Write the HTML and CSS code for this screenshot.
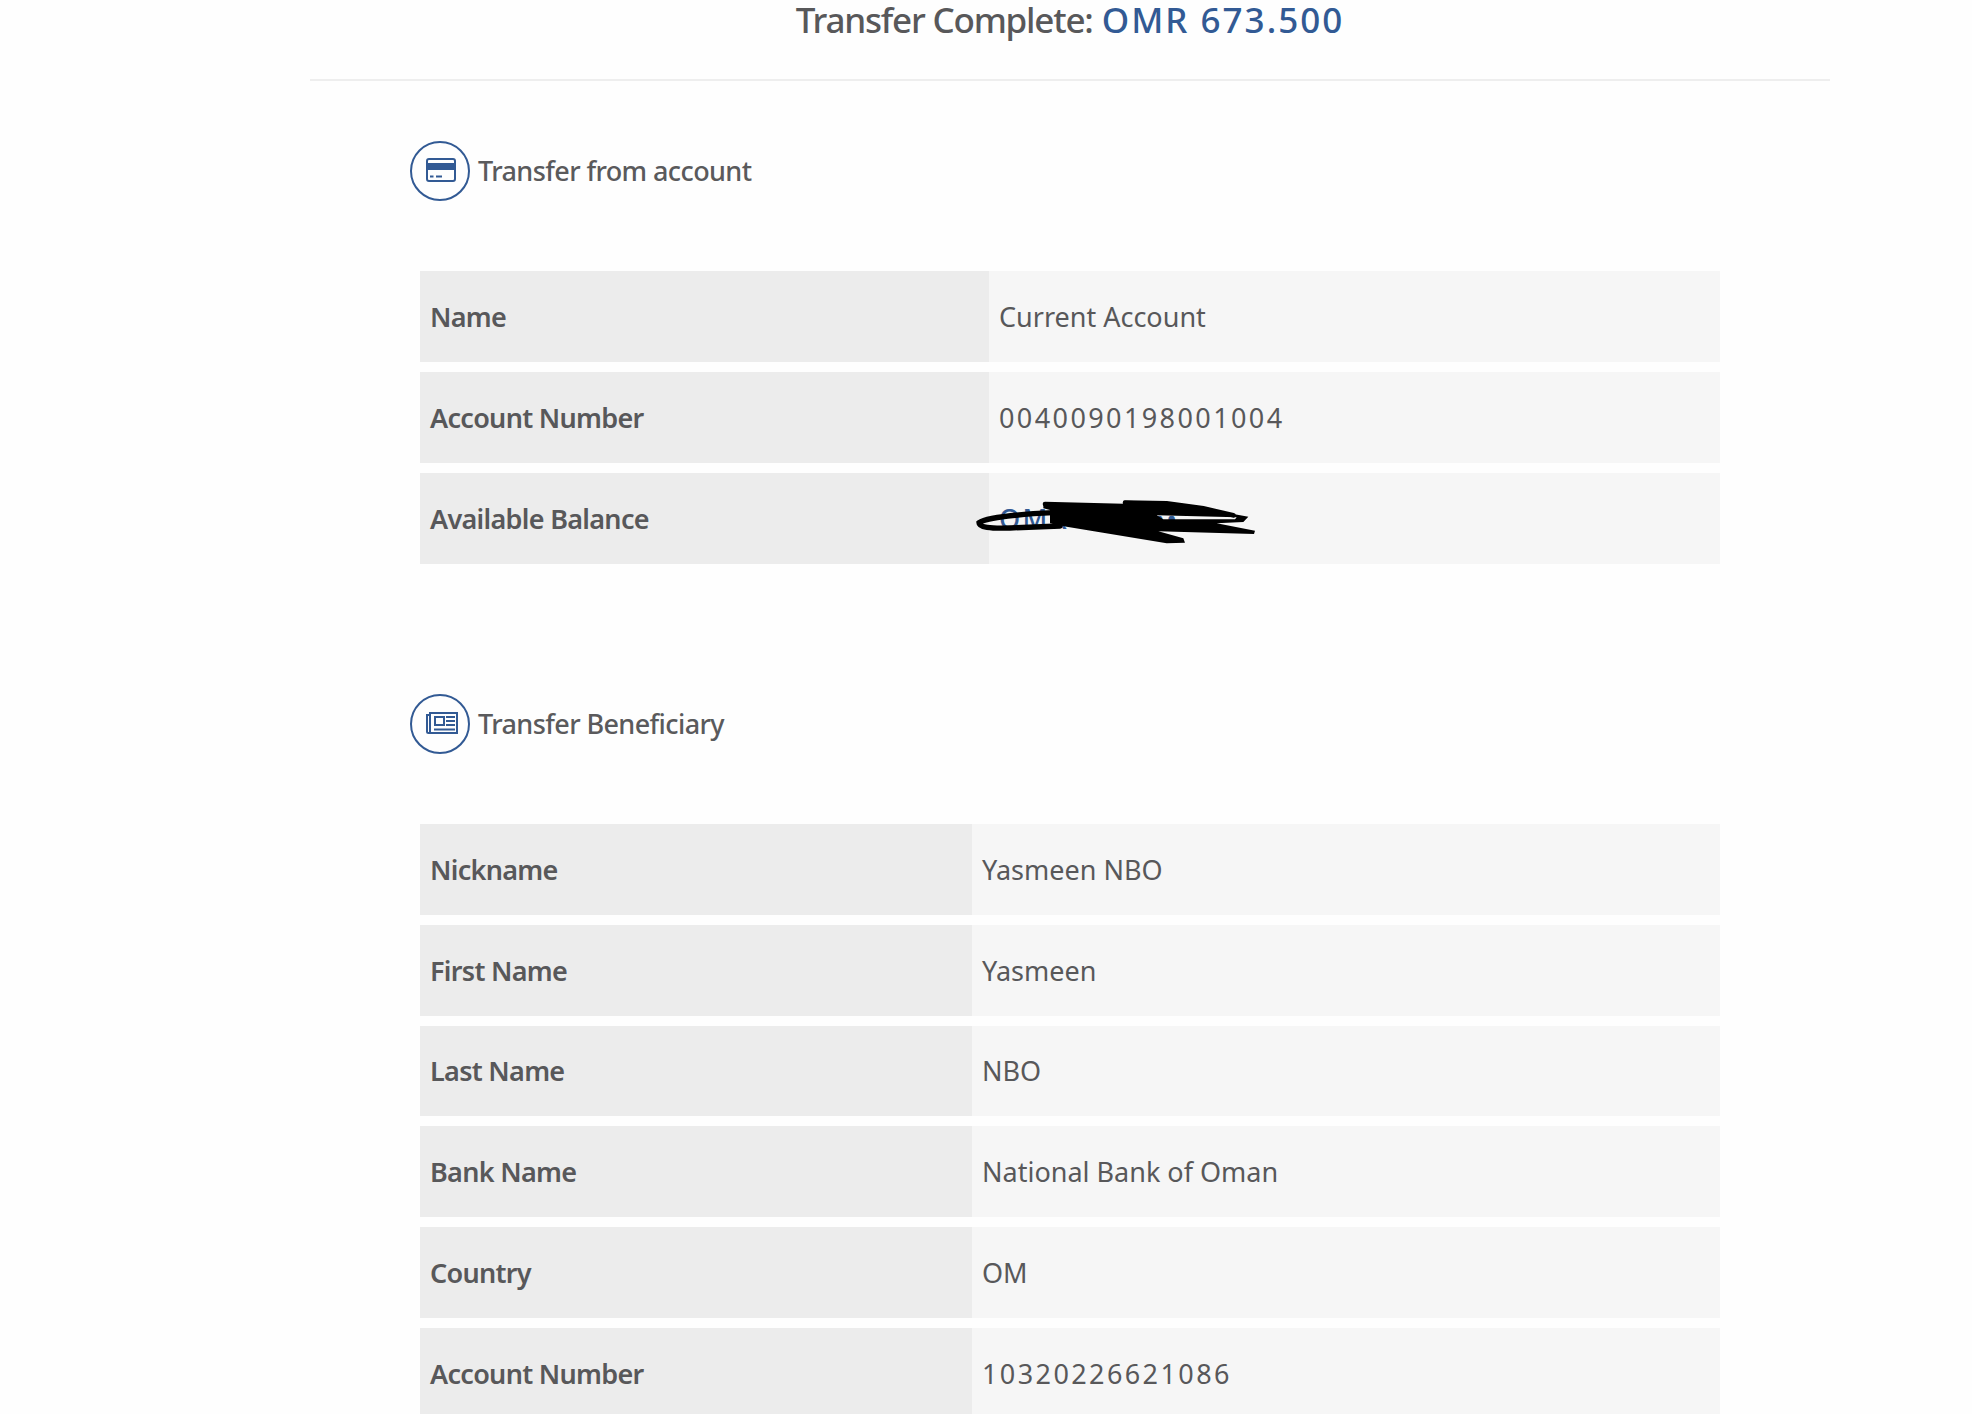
FILE: index.html
```html
<!DOCTYPE html>
<html lang="en">
<head>
<meta charset="utf-8">
<title>Transfer Complete</title>
<link rel="stylesheet" href="styles.css">
</head>
<body>
<main class="page">
  <header class="summary">
    <h1 class="summary-title"><span class="summary-label">Transfer Complete:</span> <span class="amount">OMR 673.500</span></h1>
  </header>

  <section class="section">
    <div class="section-head">
      <span class="badge">
        <svg class="icon-card" width="30" height="24" viewBox="0 0 30 24" aria-hidden="true">
          <rect x="1" y="1" width="28" height="22" rx="2" fill="none" stroke="#325a94" stroke-width="2"/>
          <rect x="1" y="5" width="28" height="7" fill="#325a94"/>
          <rect x="4" y="17.5" width="3.5" height="2" fill="#325a94"/>
          <rect x="10" y="17.5" width="6" height="2" fill="#325a94"/>
        </svg>
      </span>
      <h2 class="section-title">Transfer from account</h2>
    </div>
    <table class="details details-from">
      <tr><th>Name</th><td>Current Account</td></tr>
      <tr><th>Account Number</th><td class="num">0040090198001004</td></tr>
      <tr><th>Available Balance</th><td class="balance num"><span class="amount-small">OMR ••••••••</span>
        <svg class="scribble" width="290" height="50" viewBox="75 105 870 150" aria-hidden="true">
          <path fill="#000" fill-rule="evenodd" d="M280 130L520 135L522 122L650 125L760 140L850 162L895 170L880 186L800 190L915 212L912 222L625 214L700 235L705 248L650 250L500 225L350 200L300 190L300 150L280 145ZM620 166L860 172L855 178L640 178Z"/>
          <path fill="none" stroke="#000" stroke-width="16" stroke-linecap="round" d="M310 158C220 162 110 172 87 188C87 202 120 206 180 204C230 202 280 200 330 198"/>
          <path fill="none" stroke="#000" stroke-width="14" stroke-linecap="round" d="M285 132L520 138M525 128L650 130L760 145L850 166"/>
        </svg>
      </td></tr>
    </table>
  </section>

  <section class="section section-next">
    <div class="section-head">
      <span class="badge">
        <svg class="icon-news" width="32" height="22" viewBox="0 0 32 22" aria-hidden="true">
          <g fill="none" stroke="#325a94" stroke-width="2">
            <path d="M4 3H1V19.5A1.5 1.5 0 0 0 2.5 21H31V1H4V21"/>
            <rect x="9" y="5" width="9" height="8"/>
          </g>
          <g fill="#325a94">
            <rect x="20" y="4" width="9" height="2"/>
            <rect x="20" y="8" width="9" height="2"/>
            <rect x="20" y="12" width="9" height="2"/>
            <rect x="8" y="16.5" width="21" height="2"/>
          </g>
        </svg>
      </span>
      <h2 class="section-title">Transfer Beneficiary</h2>
    </div>
    <table class="details details-to">
      <tr><th>Nickname</th><td>Yasmeen NBO</td></tr>
      <tr><th>First Name</th><td>Yasmeen</td></tr>
      <tr><th>Last Name</th><td>NBO</td></tr>
      <tr><th>Bank Name</th><td>National Bank of Oman</td></tr>
      <tr><th>Country</th><td>OM</td></tr>
      <tr><th>Account Number</th><td class="num">10320226621086</td></tr>
    </table>
  </section>
</main>
</body>
</html>
```
FILE: styles.css
```css
html, body {
  margin: 0;
  padding: 0;
  height: 100%;
  overflow: hidden;
  background: #fefefe;
}

body {
  font-family: "Noto Sans", "Open Sans", sans-serif;
  color: #58585a;
}

.page {
  width: 1520px;
  margin-left: 310px;
}

.summary {
  height: 79px;
  border-bottom: 2px solid #eeeeee;
  text-align: center;
}

.summary-title {
  margin: 0;
  font-size: 35px;
  line-height: 40px;
  font-weight: 500;
  color: #58585a;
}

.summary-label {
  letter-spacing: -1.2px;
}

.amount {
  color: #325a94;
  letter-spacing: 2px;
}

.section {
  margin-top: 60px;
  padding-left: 100px;
}

.section-next {
  margin-top: 120px;
}

.section-head {
  display: flex;
  align-items: center;
  gap: 8px;
  height: 60px;
  margin-bottom: 60px;
}

.badge {
  flex: none;
  display: flex;
  align-items: center;
  justify-content: center;
  box-sizing: border-box;
  width: 60px;
  height: 60px;
  border: 2px solid #325a94;
  border-radius: 50%;
}

.icon-card {
  margin: -2px 0 0 2px;
}

.icon-news {
  margin: -3px 0 0 4px;
}

.section-title {
  margin: 0 0 2px;
  font-size: 27px;
  font-weight: 500;
  letter-spacing: -0.6px;
  color: #5a5a5c;
}

.details {
  width: 1300px;
  margin-left: 10px;
  border-collapse: separate;
  border-spacing: 0 10px;
  table-layout: fixed;
  font-size: 27px;
}

.details th,
.details td {
  box-sizing: border-box;
  padding: 0 10px;
  text-align: left;
}

.details-from th,
.details-from td {
  height: 91px;
}

.details-to th,
.details-to td {
  height: 90.8px;
}

.details th {
  font-weight: 600;
  letter-spacing: -0.7px;
  background: #ececec;
}

.details td {
  font-weight: 400;
  background: #f6f6f6;
}

.details .num {
  letter-spacing: 2.4px;
}

.details-from th {
  width: 569px;
}

.details-to th {
  width: 552px;
}

.balance {
  position: relative;
}

.amount-small {
  color: #325a94;
  font-weight: 500;
}

.scribble {
  position: absolute;
  left: -14px;
  top: 22px;
}
```
